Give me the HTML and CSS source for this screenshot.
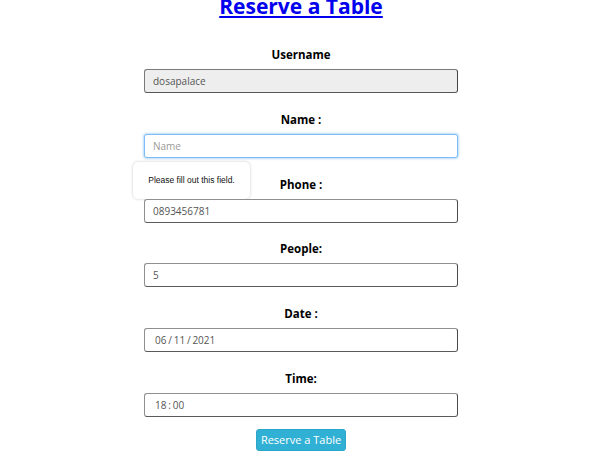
FILE: index.html
```html
<!DOCTYPE html>
<html>
<head>
<meta charset="utf-8">
<link rel="stylesheet" href="styles.css">
</head>
<body>
<div class="page">
  <h1 class="title"><a href="#">Reserve a Table</a></h1>
  <form class="form">
    <div class="group">
      <label class="label">Username</label>
      <div class="input readonly">dosapalace</div>
    </div>
    <div class="group">
      <label class="label">Name :</label>
      <div class="input focused placeholder">Name</div>
      <div class="tooltip">Please fill out this field.</div>
    </div>
    <div class="group">
      <label class="label">Phone :</label>
      <div class="input">0893456781</div>
    </div>
    <div class="group">
      <label class="label">People:</label>
      <div class="input">5</div>
    </div>
    <div class="group">
      <label class="label">Date :</label>
      <div class="input dt">06 / 11 / 2021</div>
    </div>
    <div class="group">
      <label class="label">Time:</label>
      <div class="input dt">18 : 00</div>
    </div>
    <div class="actions">
      <button type="button" class="btn">Reserve a Table</button>
    </div>
  </form>
</div>
</body>
</html>
```
FILE: styles.css
```css
html, body {
  margin: 0;
  padding: 0;
  background: #fff;
}
body {
  font-family: "Open Sans", "DejaVu Sans", sans-serif;
  color: #000;
  overflow: hidden;
}
.page {
  width: 602px;
  margin-top: -8px;
}
.title {
  margin: 0;
  text-align: center;
  font-size: 21px;
  font-weight: 700;
  line-height: 28px;
}
.title a {
  color: #0000ee;
  text-decoration: underline;
}
.form {
  display: flex;
  flex-direction: column;
  align-items: center;
  gap: 18.8px;
  margin-top: 27px;
}
.group {
  display: flex;
  flex-direction: column;
  align-items: center;
  gap: 6px;
  position: relative;
}
.label {
  font-size: 11.5px;
  font-weight: 700;
  line-height: 16px;
}
.input {
  box-sizing: border-box;
  width: 314px;
  height: 24px;
  border: 1px solid #8f8f8f;
  border-right-color: #4a4a4a;
  border-bottom-color: #5a5a5a;
  border-radius: 3px;
  padding: 0 8px;
  font-size: 10px;
  line-height: 22px;
  color: #555;
  background: #fff;
}
.input.readonly {
  background: #eeeeee;
  border-color: #7a7a7a;
  border-right-color: #444;
  border-bottom-color: #555;
}
.input.focused {
  border-color: #7fbdf7;
  box-shadow: 0 0 2px 1px rgba(102, 175, 233, 0.45);
}
.input.placeholder {
  color: #9a9a9a;
}
.input.dt {
  padding-left: 10px;
  word-spacing: -0.8px;
}
.tooltip {
  position: absolute;
  left: -11px;
  top: 50px;
  width: 117px;
  height: 37px;
  box-sizing: border-box;
  background: #fff;
  border-radius: 5px;
  box-shadow: 0 0 3px rgba(0, 0, 0, 0.22);
  font-family: "Liberation Sans", Arial, sans-serif;
  font-size: 8.5px;
  color: #111;
  display: flex;
  align-items: center;
  justify-content: center;
  padding-bottom: 1px;
}
.actions {
  display: flex;
  margin-top: -7px;
}
.btn {
  width: 90px;
  height: 22px;
  border: 1px solid #2aa6c9;
  border-radius: 3px;
  background: #31b0d5;
  color: #fff;
  font-family: "Open Sans", sans-serif;
  font-size: 11px;
  padding: 0;
  line-height: 20px;
}
```
